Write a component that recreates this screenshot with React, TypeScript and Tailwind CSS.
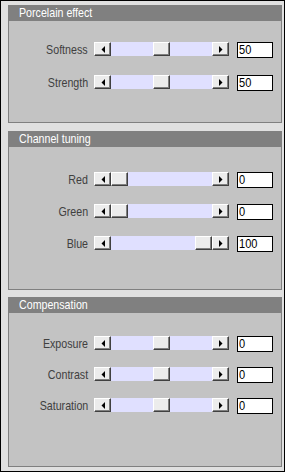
import React from "react";

type Row = { label: string; value: number; pos: number };

const panels: { title: string; rows: Row[]; pt: string; gap: string; h: string }[] = [
  {
    title: "Porcelain effect",
    rows: [
      { label: "Softness", value: 50, pos: 50 },
      { label: "Strength", value: 50, pos: 50 },
    ],
    pt: "pt-[21px]",
    gap: "gap-[17px]",
    h: "h-[118px]",
  },
  {
    title: "Channel tuning",
    rows: [
      { label: "Red", value: 0, pos: 0 },
      { label: "Green", value: 0, pos: 0 },
      { label: "Blue", value: 100, pos: 100 },
    ],
    pt: "pt-[25px]",
    gap: "gap-[16px]",
    h: "h-[159px]",
  },
  {
    title: "Compensation",
    rows: [
      { label: "Exposure", value: 0, pos: 50 },
      { label: "Contrast", value: 0, pos: 50 },
      { label: "Saturation", value: 0, pos: 50 },
    ],
    pt: "pt-[23px]",
    gap: "gap-[15px]",
    h: "h-[170px]",
  },
];

const Bevel = ({ className, children }: { className?: string; children?: React.ReactNode }) => (
  <div
    className={`flex items-center justify-center bg-[#ececec] border-t border-l border-t-white border-l-white border-b border-r border-b-[#404040] border-r-[#404040] shadow-[inset_-1px_-1px_0_#808080] ${className ?? ""}`}>
    {children}
  </div>
);

const Arrow = ({ dir }: { dir: "left" | "right" }) => (
  <svg width="4" height="7" viewBox="0 0 4 7">
    {dir === "left" ? <polygon points="4,0 4,7 0.5,3.5" fill="#000" /> : <polygon points="0,0 0,7 3.5,3.5" fill="#000" />}
  </svg>
);

const ScrollBar = ({ pos }: { pos: number }) => {
  const offset = Math.round((84 * pos) / 100);
  return (
    <div className="flex w-[135px] h-[14px]">
      <Bevel className="w-[17px] h-full shrink-0">
        <Arrow dir="left" />
      </Bevel>
      <div className="flex flex-1 h-full bg-[#e0e0ff]">
        <div style={{ width: offset }} className="shrink-0" />
        <Bevel className="w-[17px] h-full shrink-0" />
      </div>
      <Bevel className="w-[17px] h-full shrink-0">
        <Arrow dir="right" />
      </Bevel>
    </div>
  );
};

export default function App() {
  return (
    <div
      className="w-[285px] h-[472px] border border-black bg-[#e0e0e0] pt-[4px] pl-[7px] pr-[2px] flex flex-col gap-[8px]"
      style={{ fontFamily: '"Liberation Sans", Arial, sans-serif' }}>
      {panels.map((p, i) => (
        <div key={p.title} className={`flex flex-col w-[274px] ${p.h} ${i === 2 ? "-mt-[1px]" : ""}`}>
          <div className="h-[16px] bg-[#808080] text-white text-[13px] leading-[16px] pl-[11px] whitespace-nowrap">
            <span className="inline-block origin-left scale-x-[0.82]">{p.title}</span>
          </div>
          <div className={`flex-1 flex flex-col bg-[#c3c3c3] border-l border-r border-b border-[#808080] ${p.pt} ${p.gap}`}>
            {p.rows.map((r) => (
              <div key={r.label} className="flex items-start h-[16px]">
                <div className="w-[79px] text-right text-[13px] leading-[15px] text-[#404040] whitespace-nowrap">
                  <span className="inline-block origin-right scale-x-[0.82]">{r.label}</span>
                </div>
                <div className="ml-[6px]">
                  <ScrollBar pos={r.pos} />
                </div>
                <div className="ml-[8px] w-[36px] h-[16px] bg-white border border-black text-[13px] leading-[14px] pl-[1px] text-black whitespace-nowrap">
                  <span className="inline-block origin-left scale-x-[0.85]">{r.value}</span>
                </div>
              </div>
            ))}
          </div>
        </div>
      ))}
    </div>
  );
}
